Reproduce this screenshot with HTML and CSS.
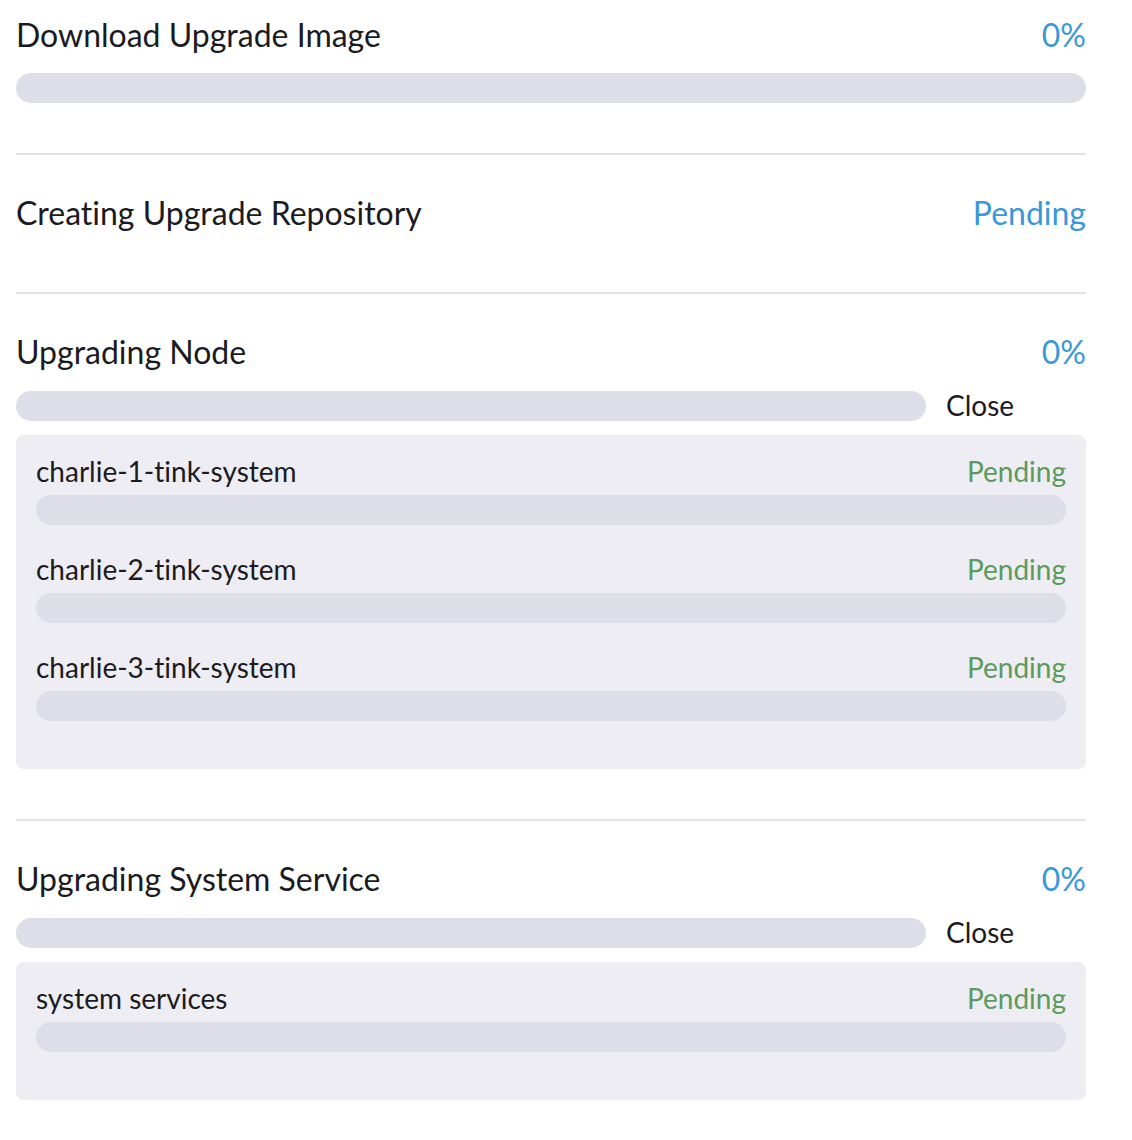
FILE: index.html
```html
<!DOCTYPE html>
<html>
<head>
<meta charset="utf-8">
<link rel="stylesheet" href="styles.css">
</head>
<body>
<div class="page">
  <section class="step step-first">
    <div class="step-head">
      <span class="step-title">Download Upgrade Image</span>
      <span class="step-status">0%</span>
    </div>
    <div class="bar-row">
      <div class="bar"></div>
    </div>
  </section>

  <section class="step step-plain">
    <div class="step-head">
      <span class="step-title">Creating Upgrade Repository</span>
      <span class="step-status">Pending</span>
    </div>
  </section>

  <section class="step">
    <div class="step-head">
      <span class="step-title">Upgrading Node</span>
      <span class="step-status">0%</span>
    </div>
    <div class="bar-row">
      <div class="bar"></div>
      <span class="toggle">Close</span>
    </div>
    <div class="details">
      <div class="item">
        <div class="item-head">
          <span class="item-name">charlie-1-tink-system</span>
          <span class="item-status">Pending</span>
        </div>
        <div class="bar"></div>
      </div>
      <div class="item">
        <div class="item-head">
          <span class="item-name">charlie-2-tink-system</span>
          <span class="item-status">Pending</span>
        </div>
        <div class="bar"></div>
      </div>
      <div class="item">
        <div class="item-head">
          <span class="item-name">charlie-3-tink-system</span>
          <span class="item-status">Pending</span>
        </div>
        <div class="bar"></div>
      </div>
    </div>
  </section>

  <section class="step step-last">
    <div class="step-head">
      <span class="step-title">Upgrading System Service</span>
      <span class="step-status">0%</span>
    </div>
    <div class="bar-row">
      <div class="bar"></div>
      <span class="toggle">Close</span>
    </div>
    <div class="details">
      <div class="item">
        <div class="item-head">
          <span class="item-name">system services</span>
          <span class="item-status">Pending</span>
        </div>
        <div class="bar"></div>
      </div>
    </div>
  </section>
</div>
</body>
</html>
```

FILE: styles.css
```css
html, body {
  margin: 0;
  padding: 0;
  background: #ffffff;
}

body {
  font-family: Lato, "Open Sans", sans-serif;
  color: #1b1b1f;
  font-variant-ligatures: none;
  font-feature-settings: "liga" 0, "clig" 0;
}

.page {
  width: 1070px;
  margin-left: 16px;
  padding-top: 17px;
}

.step {
  padding: 40px 0 50px;
  border-bottom: 2px solid #e2e2ea;
}

.step-first {
  padding-top: 0;
}

.step-plain {
  padding-bottom: 61px;
}

.step-last {
  border-bottom: none;
}

.step-head {
  display: flex;
  justify-content: space-between;
  align-items: baseline;
  font-size: 32px;
  line-height: 36px;
}

.step-status {
  color: #3a98d8;
}

.bar-row {
  display: flex;
  align-items: center;
  margin-top: 20px;
}

.bar {
  flex: 1;
  height: 30px;
  border-radius: 15px;
  background: #dedee8;
}

.toggle {
  width: 140px;
  margin-left: 20px;
  font-size: 28px;
  line-height: 31px;
}

.details {
  margin-top: 14px;
  background: #ededf3;
  border-radius: 8px;
  padding: 21px 20px 19px;
}

.item {
  margin-bottom: 29px;
}

.item-head {
  display: flex;
  justify-content: space-between;
  align-items: baseline;
  font-size: 28px;
  line-height: 31px;
  margin-bottom: 8px;
}

.item-status {
  color: #5b9b5b;
}
```
